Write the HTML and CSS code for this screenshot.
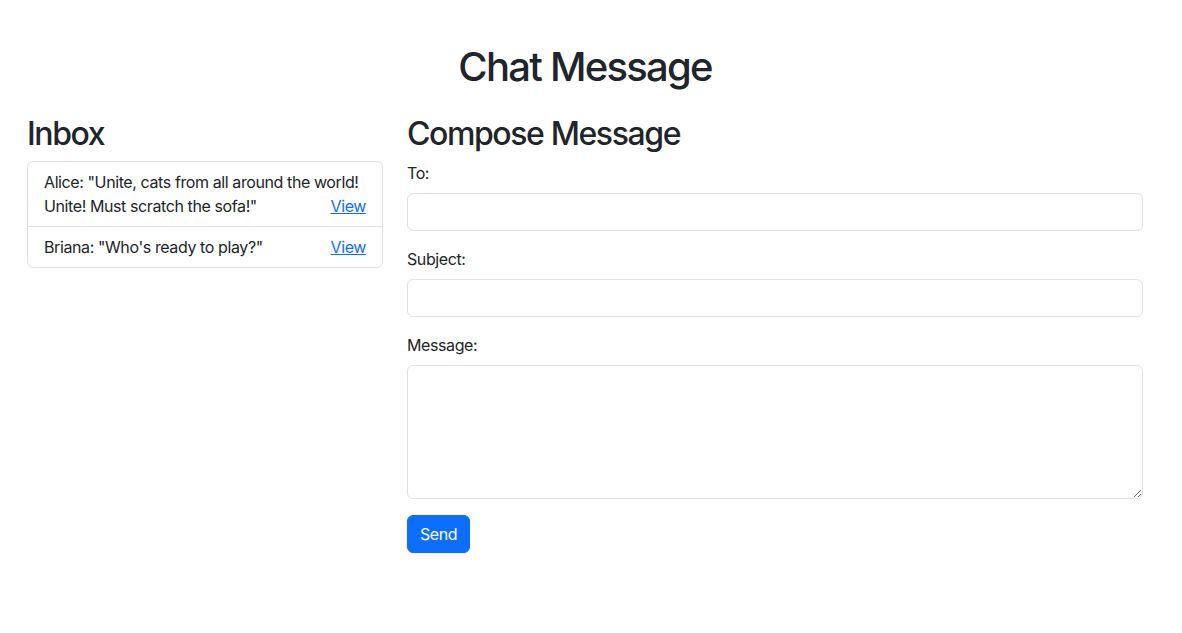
FILE: index.html
```html
<!DOCTYPE html>
<html lang="en">
<head>
<meta charset="utf-8">
<title>Chat Message</title>
<link rel="stylesheet" href="styles.css">
</head>
<body>
<div class="container">
  <h1 class="title">Chat Message</h1>
  <div class="row">
    <div class="col-left">
      <h2 class="heading">Inbox</h2>
      <ul class="list-group">
        <li class="list-item">Alice: "Unite, cats from all around the world! Unite! Must scratch the sofa!"<a href="#" class="view">View</a></li>
        <li class="list-item">Briana: "Who's ready to play?"<a href="#" class="view">View</a></li>
      </ul>
    </div>
    <div class="col-right">
      <h2 class="heading">Compose Message</h2>
      <form class="form">
        <div class="field">
          <label class="label" for="to">To:</label>
          <input class="control" id="to" type="text">
        </div>
        <div class="field">
          <label class="label" for="subject">Subject:</label>
          <input class="control" id="subject" type="text">
        </div>
        <div class="field">
          <label class="label" for="message">Message:</label>
          <textarea class="control textarea" id="message" rows="5"></textarea>
        </div>
        <button type="button" class="btn">Send</button>
      </form>
    </div>
  </div>
</div>
</body>
</html>
```
FILE: styles.css
```css
* { box-sizing: border-box; }
html, body { margin: 0; padding: 0; }
body {
  font-family: Inter, "Noto Sans", "Liberation Sans", sans-serif;
  font-size: 16px;
  line-height: 1.5;
  letter-spacing: -0.025em;
  color: #212529;
  background: #fff;
}
.container {
  width: 1140px;
  margin-left: 15px;
  padding: 43px 12px 0;
}
.title {
  margin: 0 0 24px;
  font-size: 40px;
  font-weight: 500;
  line-height: 1.2;
  letter-spacing: -0.044em;
  text-align: center;
}
.row {
  display: flex;
  margin: 0 -12px;
}
.col-left { width: 380px; padding: 0 12px; }
.col-right { width: 760px; padding: 0 12px; }
.heading {
  margin: 0 0 8px;
  font-size: 32px;
  font-weight: 500;
  line-height: 1.2;
  letter-spacing: -0.044em;
}
.list-group {
  list-style: none;
  margin: 0;
  padding: 0;
  border: 1px solid #dee2e6;
  border-radius: 6px;
}
.list-item {
  padding: 8px 16px;
  border-top: 1px solid #dee2e6;
}
.list-item:first-child { border-top: 0; }
.list-item::after { content: ""; display: block; clear: both; }
.view {
  float: right;
  color: #0d6efd;
  text-decoration: underline;
}
.field { margin-bottom: 16px; }
.label { display: inline-block; margin-bottom: 8px; }
.control {
  display: block;
  width: 100%;
  height: 38px;
  padding: 6px 12px;
  font: inherit;
  letter-spacing: inherit;
  color: #212529;
  background: #fff;
  border: 1px solid #dee2e6;
  border-radius: 6px;
}
.textarea { height: 134px; resize: vertical; }
.btn {
  display: inline-block;
  height: 38px;
  padding: 6px 12px;
  font: inherit;
  letter-spacing: inherit;
  color: #fff;
  background: #0d6efd;
  border: 1px solid #0d6efd;
  border-radius: 6px;
}
```
